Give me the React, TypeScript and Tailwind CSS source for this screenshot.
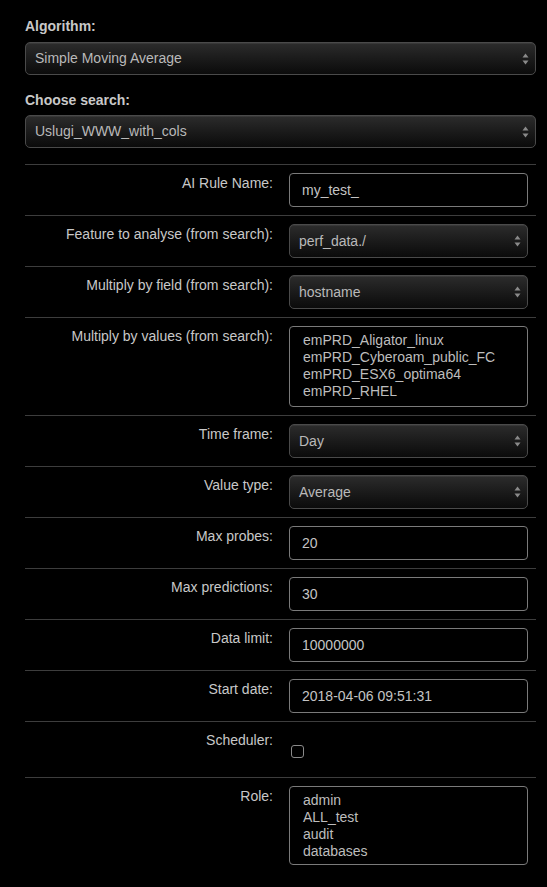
import React from 'react';

const font = { fontFamily: '"Liberation Sans", Arial, sans-serif' };

const Arrows: React.FC = () => (
    <svg width="7" height="12" viewBox="0 0 7 12" className="shrink-0">
        <path d="M3.5 0.5 L6.5 4.5 L0.5 4.5 Z" fill="#8a8a8a" />
        <path d="M3.5 11.5 L6.5 7.5 L0.5 7.5 Z" fill="#8a8a8a" />
    </svg>
);

const Select: React.FC<{ value: string; className?: string }> = ({ value, className = 'h-[34px]' }) => (
    <div
        className={`flex items-center justify-between pl-[9px] pr-[6px] rounded-[5px] border border-[#4a4a4a] bg-gradient-to-b from-[#2c2c2c] to-[#0b0b0b] text-[14px] text-[#b9b9b9] shadow-[inset_0_1px_0_rgba(255,255,255,0.06)] ${className}`}
    >
        <span>{value}</span>
        <Arrows />
    </div>
);

const Input: React.FC<{ value: string }> = ({ value }) => (
    <div className="flex items-center h-[34px] pl-[12px] rounded-[4px] border border-[#7a7a7a] bg-black text-[14px] text-[#c4c4c4]">
        {value}
    </div>
);

const ListBox: React.FC<{ items: string[]; height: string }> = ({ items, height }) => (
    <div className={`${height} pt-[5px] pl-[13px] rounded-[4px] border border-[#7a7a7a] bg-black text-[14px] leading-[17px] text-[#bdbdbd]`}>
        {items.map((i) => (
            <div key={i}>{i}</div>
        ))}
    </div>
);

const Row: React.FC<{ label: string; children: React.ReactNode }> = ({ label, children }) => (
    <div className="flex border-t border-[#3d3d3d] py-[8px] pr-[8px]">
        <div className="w-[248px] shrink-0 text-right text-[14px] leading-[20px] text-[#c8c8c8]">{label}</div>
        <div className="ml-[16px] flex-1">{children}</div>
    </div>
);

export default function App() {
    return (
        <div className="min-h-screen w-[547px] bg-black pt-[16px] pl-[25px] pr-[11px] pb-[14px]" style={font}>
            <div className="text-[14px] font-bold leading-[20px] text-[#c8c8c8] mb-[6px]">Algorithm:</div>
            <Select value="Simple Moving Average" className="h-[33px] mb-[15px]" />
            <div className="text-[14px] font-bold leading-[20px] text-[#c8c8c8] mb-[5px]">Choose search:</div>
            <Select value="Uslugi_WWW_with_cols" className="h-[33px] mb-[16px]" />

            <Row label="AI Rule Name:">
                <Input value="my_test_" />
            </Row>
            <Row label="Feature to analyse (from search):">
                <Select value="perf_data./" />
            </Row>
            <Row label="Multiply by field (from search):">
                <Select value="hostname" />
            </Row>
            <Row label="Multiply by values (from search):">
                <ListBox
                    height="h-[81px]"
                    items={['emPRD_Aligator_linux', 'emPRD_Cyberoam_public_FC', 'emPRD_ESX6_optima64', 'emPRD_RHEL']}
                />
            </Row>
            <Row label="Time frame:">
                <Select value="Day" />
            </Row>
            <Row label="Value type:">
                <Select value="Average" />
            </Row>
            <Row label="Max probes:">
                <Input value="20" />
            </Row>
            <Row label="Max predictions:">
                <Input value="30" />
            </Row>
            <Row label="Data limit:">
                <Input value="10000000" />
            </Row>
            <Row label="Start date:">
                <Input value="2018-04-06 09:51:31" />
            </Row>
            <Row label="Scheduler:">
                <div className="h-[39px] pt-[15px] pl-[2px]">
                    <div className="w-[13px] h-[13px] rounded-[3px] border border-[#8a8a8a] bg-black" />
                </div>
            </Row>
            <Row label="Role:">
                <ListBox height="h-[79px]" items={['admin', 'ALL_test', 'audit', 'databases']} />
            </Row>
        </div>
    );
}
